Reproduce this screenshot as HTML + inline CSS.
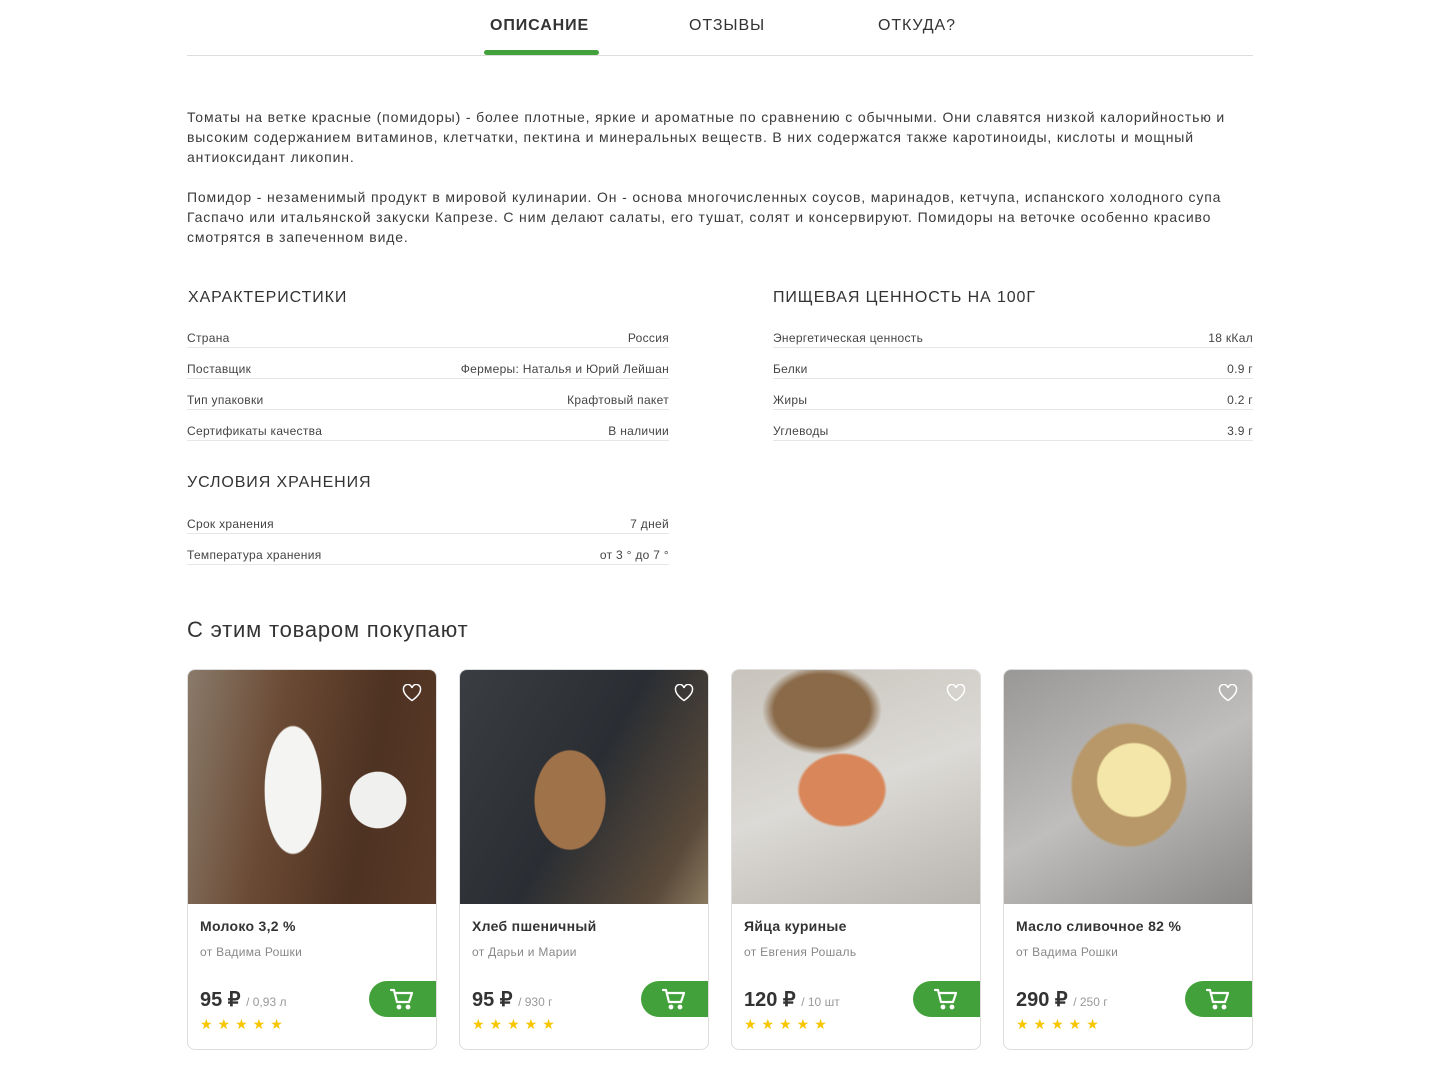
<!DOCTYPE html>
<html><head><meta charset="utf-8"><style>
*{margin:0;padding:0;box-sizing:border-box}
body{width:1440px;height:1066px;background:#fff;font-family:"Liberation Sans",sans-serif;color:#333;position:relative;overflow:hidden}
.abs{position:absolute}
.tab{position:absolute;top:17px;font-size:16px;letter-spacing:.9px;color:#333}
p{font-size:14px;line-height:20px;color:#3a3a3a;letter-spacing:.85px;white-space:nowrap}
h3{position:absolute;font-size:16px;font-weight:normal;letter-spacing:.9px;color:#333}
.row{position:absolute;height:31px;border-bottom:1px solid #e6e6e6;font-size:12px;color:#444;display:flex;justify-content:space-between;align-items:flex-end;padding-bottom:2px;letter-spacing:.3px}
.card{position:absolute;top:669px;width:250px;height:381px;border:1px solid #ddd;border-radius:8px;overflow:hidden}
.img{height:234px;position:relative}
.t{position:absolute;left:12px;top:248px;font-size:14px;font-weight:bold;color:#333;letter-spacing:.3px}
.s{position:absolute;left:12px;top:275px;font-size:12px;color:#888;letter-spacing:.3px}
.p{position:absolute;left:12px;top:317px;font-size:20px;font-weight:bold;color:#333}
.p span{font-size:12px;font-weight:normal;color:#999}
.st{position:absolute;left:12px;top:346px;color:#f7c600;font-size:14px;letter-spacing:5px}
.btn{position:absolute;right:0;top:311px;width:67px;height:36px;background:#43a13b;border-radius:18px 0 0 18px}
.btn svg{position:absolute;left:20px;top:6px}
.heart{position:absolute;right:14px;top:14px}
</style></head><body>
<div class="tab" style="left:490px;font-weight:bold;color:#333">ОПИСАНИЕ</div>
<div class="tab" style="left:689px">ОТЗЫВЫ</div>
<div class="tab" style="left:878px">ОТКУДА?</div>
<div class="abs" style="left:187px;top:55px;width:1066px;height:1px;background:#ddd"></div>
<div class="abs" style="left:484px;top:50px;width:115px;height:5px;background:#43a13b;border-radius:3px"></div>

<div class="abs" style="left:187px;top:107px;width:1066px">
<p>Томаты на ветке красные (помидоры) - более плотные, яркие и ароматные по сравнению с обычными. Они славятся низкой калорийностью и<br>высоким содержанием витаминов, клетчатки, пектина и минеральных веществ. В них содержатся также каротиноиды, кислоты и мощный<br>антиоксидант ликопин.</p>
<p style="margin-top:20px">Помидор - незаменимый продукт в мировой кулинарии. Он - основа многочисленных соусов, маринадов, кетчупа, испанского холодного супа<br>Гаспачо или итальянской закуски Капрезе. С ним делают салаты, его тушат, солят и консервируют. Помидоры на веточке особенно красиво<br>смотрятся в запеченном виде.</p>
</div>

<h3 style="left:188px;top:289px">ХАРАКТЕРИСТИКИ</h3>
<h3 style="left:773px;top:289px">ПИЩЕВАЯ ЦЕННОСТЬ НА 100Г</h3>
<div class="row" style="left:187px;top:317px;width:482px"><span>Страна</span><span>Россия</span></div>
<div class="row" style="left:187px;top:348px;width:482px"><span>Поставщик</span><span>Фермеры: Наталья и Юрий Лейшан</span></div>
<div class="row" style="left:187px;top:379px;width:482px"><span>Тип упаковки</span><span>Крафтовый пакет</span></div>
<div class="row" style="left:187px;top:410px;width:482px"><span>Сертификаты качества</span><span>В наличии</span></div>
<div class="row" style="left:773px;top:317px;width:480px"><span>Энергетическая ценность</span><span>18 кКал</span></div>
<div class="row" style="left:773px;top:348px;width:480px"><span>Белки</span><span>0.9 г</span></div>
<div class="row" style="left:773px;top:379px;width:480px"><span>Жиры</span><span>0.2 г</span></div>
<div class="row" style="left:773px;top:410px;width:480px"><span>Углеводы</span><span>3.9 г</span></div>
<h3 style="left:187px;top:474px">УСЛОВИЯ ХРАНЕНИЯ</h3>
<div class="row" style="left:187px;top:503px;width:482px"><span>Срок хранения</span><span>7 дней</span></div>
<div class="row" style="left:187px;top:534px;width:482px"><span>Температура хранения</span><span>от 3 ° до 7 °</span></div>

<div class="abs" style="left:187px;top:617px;font-size:22px;color:#333;letter-spacing:.8px">С этим товаром покупают</div>

<div class="card" style="left:187px">
<div class="img" style="background:radial-gradient(ellipse 40px 90px at 105px 120px,#f4f4f2 70%,transparent 72%),radial-gradient(circle 35px at 190px 130px,#f0f0ee 80%,transparent 82%),linear-gradient(100deg,#8a7a6a 0%,#6a4a34 35%,#4e3222 70%,#5a3a28 100%)"></div>
<div class="t">Молоко 3,2 %</div><div class="s">от Вадима Рошки</div>
<div class="p">95 ₽ <span>/ 0,93 л</span></div><div class="st">★★★★★</div>
<div class="btn"><svg width="26" height="24" viewBox="0 0 26 24" fill="none" stroke="#fff" stroke-width="2.2" stroke-linecap="round" stroke-linejoin="round"><path d="M2 3h3l3 12h12l3-9H7"/><circle cx="10" cy="20" r="1.3" fill="#fff"/><circle cx="19" cy="20" r="1.3" fill="#fff"/></svg></div>
<svg class="heart" width="20" height="18" viewBox="0 0 20 18" fill="none" stroke="#fff" stroke-width="1.5"><path d="M10 16.5S1.5 11 1.5 5.5A4 4 0 0 1 10 4a4 4 0 0 1 8.5 1.5C18.5 11 10 16.5 10 16.5z"/></svg>
</div>
<div class="card" style="left:459px">
<div class="img" style="background:radial-gradient(ellipse 50px 70px at 110px 130px,#a0724a 70%,transparent 72%),linear-gradient(120deg,#3a3e42 0%,#2a2e33 50%,#5a4a3a 85%,#8a7a60 100%)"></div>
<div class="t">Хлеб пшеничный</div><div class="s">от Дарьи и Марии</div>
<div class="p">95 ₽ <span>/ 930 г</span></div><div class="st">★★★★★</div>
<div class="btn"><svg width="26" height="24" viewBox="0 0 26 24" fill="none" stroke="#fff" stroke-width="2.2" stroke-linecap="round" stroke-linejoin="round"><path d="M2 3h3l3 12h12l3-9H7"/><circle cx="10" cy="20" r="1.3" fill="#fff"/><circle cx="19" cy="20" r="1.3" fill="#fff"/></svg></div>
<svg class="heart" width="20" height="18" viewBox="0 0 20 18" fill="none" stroke="#fff" stroke-width="1.5"><path d="M10 16.5S1.5 11 1.5 5.5A4 4 0 0 1 10 4a4 4 0 0 1 8.5 1.5C18.5 11 10 16.5 10 16.5z"/></svg>
</div>
<div class="card" style="left:731px">
<div class="img" style="background:radial-gradient(ellipse 60px 50px at 110px 120px,#d9875a 70%,transparent 75%),radial-gradient(ellipse 80px 60px at 90px 40px,#8a6a48 60%,transparent 75%),linear-gradient(160deg,#c8c4bc 0%,#dcdad6 50%,#b8b4ae 100%)"></div>
<div class="t">Яйца куриные</div><div class="s">от Евгения Рошаль</div>
<div class="p">120 ₽ <span>/ 10 шт</span></div><div class="st">★★★★★</div>
<div class="btn"><svg width="26" height="24" viewBox="0 0 26 24" fill="none" stroke="#fff" stroke-width="2.2" stroke-linecap="round" stroke-linejoin="round"><path d="M2 3h3l3 12h12l3-9H7"/><circle cx="10" cy="20" r="1.3" fill="#fff"/><circle cx="19" cy="20" r="1.3" fill="#fff"/></svg></div>
<svg class="heart" width="20" height="18" viewBox="0 0 20 18" fill="none" stroke="#fff" stroke-width="1.5"><path d="M10 16.5S1.5 11 1.5 5.5A4 4 0 0 1 10 4a4 4 0 0 1 8.5 1.5C18.5 11 10 16.5 10 16.5z"/></svg>
</div>
<div class="card" style="left:1003px">
<div class="img" style="background:radial-gradient(circle 45px at 130px 110px,#f3e6a8 80%,transparent 84%),radial-gradient(ellipse 70px 75px at 125px 115px,#b89868 80%,transparent 84%),linear-gradient(150deg,#9a9896 0%,#c0bebc 50%,#8a8886 100%)"></div>
<div class="t">Масло сливочное 82 %</div><div class="s">от Вадима Рошки</div>
<div class="p">290 ₽ <span>/ 250 г</span></div><div class="st">★★★★★</div>
<div class="btn"><svg width="26" height="24" viewBox="0 0 26 24" fill="none" stroke="#fff" stroke-width="2.2" stroke-linecap="round" stroke-linejoin="round"><path d="M2 3h3l3 12h12l3-9H7"/><circle cx="10" cy="20" r="1.3" fill="#fff"/><circle cx="19" cy="20" r="1.3" fill="#fff"/></svg></div>
<svg class="heart" width="20" height="18" viewBox="0 0 20 18" fill="none" stroke="#fff" stroke-width="1.5"><path d="M10 16.5S1.5 11 1.5 5.5A4 4 0 0 1 10 4a4 4 0 0 1 8.5 1.5C18.5 11 10 16.5 10 16.5z"/></svg>
</div>
</body></html>
